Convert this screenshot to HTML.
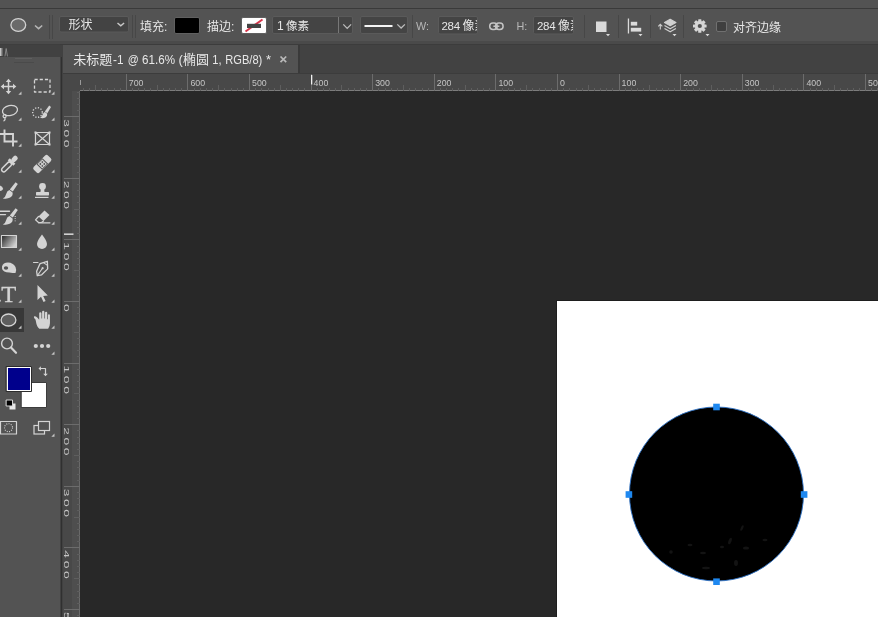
<!DOCTYPE html>
<html lang="zh-CN"><head><meta charset="utf-8"><title>未标题-1</title>
<style>
html,body{margin:0;padding:0;}
body{width:878px;height:617px;overflow:hidden;background:#282828;position:relative;font-family:"Liberation Sans","Noto Sans CJK SC",sans-serif;color:#dcdcdc;font-size:12px;}
.abs{position:absolute;}
#top{left:0;top:0;width:878px;height:8px;background:#535353;}
#topline{left:0;top:8px;width:878px;height:1px;background:#3a3a3a;}
#opt{left:0;top:9px;width:878px;height:32px;background:#535353;}
#band{left:0;top:41px;width:878px;height:33px;background:#424242;}
#band2{left:0;top:41px;width:878px;height:3px;background:#4a4a4a;}
#band3{left:0;top:44px;width:878px;height:1px;background:#3c3c3c;}
#band4{left:0;top:44px;width:60px;height:1px;background:#3e3e3e;}
#lp{left:0;top:45px;width:60px;height:572px;background:#535353;}
#lph{left:0;top:44px;width:60px;height:13px;background:#414141;}
#gap{left:60px;top:45px;width:3px;height:572px;background:#414141;}
#gap2{left:61px;top:57px;width:1px;height:560px;background:#303030;}
#tab{left:63px;top:45px;width:235px;height:28px;background:#535353;}
#tabt{left:73px;top:51px;font-size:12.5px;color:#e4e4e4;white-space:nowrap;letter-spacing:-0.1px;}
#tabx{left:277px;top:50px;font-size:12px;color:#bdbdbd;font-weight:bold;}
#doc{left:557px;top:301px;width:321px;height:316px;background:#fff;}
svg{position:absolute;left:0;top:0;will-change:transform;}
.tk{stroke:#6c6c6c;stroke-width:1;shape-rendering:crispEdges;}
.tk2{stroke:#5e5e5e;stroke-width:1;shape-rendering:crispEdges;}
.rt{font-family:"Liberation Sans",sans-serif;font-size:8.8px;fill:#c4c4c4;}
.o{position:absolute;white-space:nowrap;}
</style></head><body>
<div class="abs" id="top"></div><div class="abs" id="topline"></div>
<div class="abs" id="opt"></div>
<div class="abs" id="band"></div><div class="abs" id="band2"></div><div class="abs" id="band3"></div>
<div class="abs" id="gap"></div><div class="abs" id="gap2"></div>
<div class="abs" id="lp"></div><div class="abs" id="lph"></div><div class="abs" id="band4"></div>
<div class="abs" id="tab"></div>
<div class="abs" id="doc"></div>
<svg width="878" height="617" viewBox="0 0 878 617">
<rect x="63" y="73" width="815" height="18" fill="#484848"/>
<rect x="63" y="91" width="17" height="526" fill="#484848"/>
<rect x="63" y="73" width="815" height="1" fill="#3c3c3c"/>
<rect x="72" y="91" width="7" height="526" fill="#4e4e4e"/>
<rect x="80" y="90" width="798" height="1" fill="#7c7c7c"/>
<rect x="79" y="91" width="1" height="526" fill="#6a6a6a"/>
<line x1="83.2" y1="87.5" x2="83.2" y2="91" class="tk2"/>
<line x1="89.3" y1="87.5" x2="89.3" y2="91" class="tk2"/>
<line x1="95.5" y1="85" x2="95.5" y2="91" class="tk2"/>
<line x1="101.7" y1="87.5" x2="101.7" y2="91" class="tk2"/>
<line x1="107.8" y1="87.5" x2="107.8" y2="91" class="tk2"/>
<line x1="114.0" y1="87.5" x2="114.0" y2="91" class="tk2"/>
<line x1="120.1" y1="87.5" x2="120.1" y2="91" class="tk2"/>
<line x1="126.3" y1="74" x2="126.3" y2="91" class="tk"/>
<text x="128.8" y="86" class="rt">700</text>
<line x1="132.5" y1="87.5" x2="132.5" y2="91" class="tk2"/>
<line x1="138.6" y1="87.5" x2="138.6" y2="91" class="tk2"/>
<line x1="144.8" y1="87.5" x2="144.8" y2="91" class="tk2"/>
<line x1="150.9" y1="87.5" x2="150.9" y2="91" class="tk2"/>
<line x1="157.1" y1="85" x2="157.1" y2="91" class="tk2"/>
<line x1="163.3" y1="87.5" x2="163.3" y2="91" class="tk2"/>
<line x1="169.4" y1="87.5" x2="169.4" y2="91" class="tk2"/>
<line x1="175.6" y1="87.5" x2="175.6" y2="91" class="tk2"/>
<line x1="181.7" y1="87.5" x2="181.7" y2="91" class="tk2"/>
<line x1="187.9" y1="74" x2="187.9" y2="91" class="tk"/>
<text x="190.4" y="86" class="rt">600</text>
<line x1="194.1" y1="87.5" x2="194.1" y2="91" class="tk2"/>
<line x1="200.2" y1="87.5" x2="200.2" y2="91" class="tk2"/>
<line x1="206.4" y1="87.5" x2="206.4" y2="91" class="tk2"/>
<line x1="212.5" y1="87.5" x2="212.5" y2="91" class="tk2"/>
<line x1="218.7" y1="85" x2="218.7" y2="91" class="tk2"/>
<line x1="224.9" y1="87.5" x2="224.9" y2="91" class="tk2"/>
<line x1="231.0" y1="87.5" x2="231.0" y2="91" class="tk2"/>
<line x1="237.2" y1="87.5" x2="237.2" y2="91" class="tk2"/>
<line x1="243.3" y1="87.5" x2="243.3" y2="91" class="tk2"/>
<line x1="249.5" y1="74" x2="249.5" y2="91" class="tk"/>
<text x="252.0" y="86" class="rt">500</text>
<line x1="255.7" y1="87.5" x2="255.7" y2="91" class="tk2"/>
<line x1="261.8" y1="87.5" x2="261.8" y2="91" class="tk2"/>
<line x1="268.0" y1="87.5" x2="268.0" y2="91" class="tk2"/>
<line x1="274.1" y1="87.5" x2="274.1" y2="91" class="tk2"/>
<line x1="280.3" y1="85" x2="280.3" y2="91" class="tk2"/>
<line x1="286.5" y1="87.5" x2="286.5" y2="91" class="tk2"/>
<line x1="292.6" y1="87.5" x2="292.6" y2="91" class="tk2"/>
<line x1="298.8" y1="87.5" x2="298.8" y2="91" class="tk2"/>
<line x1="304.9" y1="87.5" x2="304.9" y2="91" class="tk2"/>
<line x1="311.1" y1="74" x2="311.1" y2="91" class="tk"/>
<text x="313.6" y="86" class="rt">400</text>
<line x1="317.3" y1="87.5" x2="317.3" y2="91" class="tk2"/>
<line x1="323.4" y1="87.5" x2="323.4" y2="91" class="tk2"/>
<line x1="329.6" y1="87.5" x2="329.6" y2="91" class="tk2"/>
<line x1="335.7" y1="87.5" x2="335.7" y2="91" class="tk2"/>
<line x1="341.9" y1="85" x2="341.9" y2="91" class="tk2"/>
<line x1="348.1" y1="87.5" x2="348.1" y2="91" class="tk2"/>
<line x1="354.2" y1="87.5" x2="354.2" y2="91" class="tk2"/>
<line x1="360.4" y1="87.5" x2="360.4" y2="91" class="tk2"/>
<line x1="366.5" y1="87.5" x2="366.5" y2="91" class="tk2"/>
<line x1="372.7" y1="74" x2="372.7" y2="91" class="tk"/>
<text x="375.2" y="86" class="rt">300</text>
<line x1="378.9" y1="87.5" x2="378.9" y2="91" class="tk2"/>
<line x1="385.0" y1="87.5" x2="385.0" y2="91" class="tk2"/>
<line x1="391.2" y1="87.5" x2="391.2" y2="91" class="tk2"/>
<line x1="397.3" y1="87.5" x2="397.3" y2="91" class="tk2"/>
<line x1="403.5" y1="85" x2="403.5" y2="91" class="tk2"/>
<line x1="409.7" y1="87.5" x2="409.7" y2="91" class="tk2"/>
<line x1="415.8" y1="87.5" x2="415.8" y2="91" class="tk2"/>
<line x1="422.0" y1="87.5" x2="422.0" y2="91" class="tk2"/>
<line x1="428.1" y1="87.5" x2="428.1" y2="91" class="tk2"/>
<line x1="434.3" y1="74" x2="434.3" y2="91" class="tk"/>
<text x="436.8" y="86" class="rt">200</text>
<line x1="440.5" y1="87.5" x2="440.5" y2="91" class="tk2"/>
<line x1="446.6" y1="87.5" x2="446.6" y2="91" class="tk2"/>
<line x1="452.8" y1="87.5" x2="452.8" y2="91" class="tk2"/>
<line x1="458.9" y1="87.5" x2="458.9" y2="91" class="tk2"/>
<line x1="465.1" y1="85" x2="465.1" y2="91" class="tk2"/>
<line x1="471.3" y1="87.5" x2="471.3" y2="91" class="tk2"/>
<line x1="477.4" y1="87.5" x2="477.4" y2="91" class="tk2"/>
<line x1="483.6" y1="87.5" x2="483.6" y2="91" class="tk2"/>
<line x1="489.7" y1="87.5" x2="489.7" y2="91" class="tk2"/>
<line x1="495.9" y1="74" x2="495.9" y2="91" class="tk"/>
<text x="498.4" y="86" class="rt">100</text>
<line x1="502.1" y1="87.5" x2="502.1" y2="91" class="tk2"/>
<line x1="508.2" y1="87.5" x2="508.2" y2="91" class="tk2"/>
<line x1="514.4" y1="87.5" x2="514.4" y2="91" class="tk2"/>
<line x1="520.5" y1="87.5" x2="520.5" y2="91" class="tk2"/>
<line x1="526.7" y1="85" x2="526.7" y2="91" class="tk2"/>
<line x1="532.9" y1="87.5" x2="532.9" y2="91" class="tk2"/>
<line x1="539.0" y1="87.5" x2="539.0" y2="91" class="tk2"/>
<line x1="545.2" y1="87.5" x2="545.2" y2="91" class="tk2"/>
<line x1="551.3" y1="87.5" x2="551.3" y2="91" class="tk2"/>
<line x1="557.5" y1="74" x2="557.5" y2="91" class="tk"/>
<text x="560.0" y="86" class="rt">0</text>
<line x1="563.7" y1="87.5" x2="563.7" y2="91" class="tk2"/>
<line x1="569.8" y1="87.5" x2="569.8" y2="91" class="tk2"/>
<line x1="576.0" y1="87.5" x2="576.0" y2="91" class="tk2"/>
<line x1="582.1" y1="87.5" x2="582.1" y2="91" class="tk2"/>
<line x1="588.3" y1="85" x2="588.3" y2="91" class="tk2"/>
<line x1="594.5" y1="87.5" x2="594.5" y2="91" class="tk2"/>
<line x1="600.6" y1="87.5" x2="600.6" y2="91" class="tk2"/>
<line x1="606.8" y1="87.5" x2="606.8" y2="91" class="tk2"/>
<line x1="612.9" y1="87.5" x2="612.9" y2="91" class="tk2"/>
<line x1="619.1" y1="74" x2="619.1" y2="91" class="tk"/>
<text x="621.6" y="86" class="rt">100</text>
<line x1="625.3" y1="87.5" x2="625.3" y2="91" class="tk2"/>
<line x1="631.4" y1="87.5" x2="631.4" y2="91" class="tk2"/>
<line x1="637.6" y1="87.5" x2="637.6" y2="91" class="tk2"/>
<line x1="643.7" y1="87.5" x2="643.7" y2="91" class="tk2"/>
<line x1="649.9" y1="85" x2="649.9" y2="91" class="tk2"/>
<line x1="656.1" y1="87.5" x2="656.1" y2="91" class="tk2"/>
<line x1="662.2" y1="87.5" x2="662.2" y2="91" class="tk2"/>
<line x1="668.4" y1="87.5" x2="668.4" y2="91" class="tk2"/>
<line x1="674.5" y1="87.5" x2="674.5" y2="91" class="tk2"/>
<line x1="680.7" y1="74" x2="680.7" y2="91" class="tk"/>
<text x="683.2" y="86" class="rt">200</text>
<line x1="686.9" y1="87.5" x2="686.9" y2="91" class="tk2"/>
<line x1="693.0" y1="87.5" x2="693.0" y2="91" class="tk2"/>
<line x1="699.2" y1="87.5" x2="699.2" y2="91" class="tk2"/>
<line x1="705.3" y1="87.5" x2="705.3" y2="91" class="tk2"/>
<line x1="711.5" y1="85" x2="711.5" y2="91" class="tk2"/>
<line x1="717.7" y1="87.5" x2="717.7" y2="91" class="tk2"/>
<line x1="723.8" y1="87.5" x2="723.8" y2="91" class="tk2"/>
<line x1="730.0" y1="87.5" x2="730.0" y2="91" class="tk2"/>
<line x1="736.1" y1="87.5" x2="736.1" y2="91" class="tk2"/>
<line x1="742.3" y1="74" x2="742.3" y2="91" class="tk"/>
<text x="744.8" y="86" class="rt">300</text>
<line x1="748.5" y1="87.5" x2="748.5" y2="91" class="tk2"/>
<line x1="754.6" y1="87.5" x2="754.6" y2="91" class="tk2"/>
<line x1="760.8" y1="87.5" x2="760.8" y2="91" class="tk2"/>
<line x1="766.9" y1="87.5" x2="766.9" y2="91" class="tk2"/>
<line x1="773.1" y1="85" x2="773.1" y2="91" class="tk2"/>
<line x1="779.3" y1="87.5" x2="779.3" y2="91" class="tk2"/>
<line x1="785.4" y1="87.5" x2="785.4" y2="91" class="tk2"/>
<line x1="791.6" y1="87.5" x2="791.6" y2="91" class="tk2"/>
<line x1="797.7" y1="87.5" x2="797.7" y2="91" class="tk2"/>
<line x1="803.9" y1="74" x2="803.9" y2="91" class="tk"/>
<text x="806.4" y="86" class="rt">400</text>
<line x1="810.1" y1="87.5" x2="810.1" y2="91" class="tk2"/>
<line x1="816.2" y1="87.5" x2="816.2" y2="91" class="tk2"/>
<line x1="822.4" y1="87.5" x2="822.4" y2="91" class="tk2"/>
<line x1="828.5" y1="87.5" x2="828.5" y2="91" class="tk2"/>
<line x1="834.7" y1="85" x2="834.7" y2="91" class="tk2"/>
<line x1="840.9" y1="87.5" x2="840.9" y2="91" class="tk2"/>
<line x1="847.0" y1="87.5" x2="847.0" y2="91" class="tk2"/>
<line x1="853.2" y1="87.5" x2="853.2" y2="91" class="tk2"/>
<line x1="859.3" y1="87.5" x2="859.3" y2="91" class="tk2"/>
<line x1="865.5" y1="74" x2="865.5" y2="91" class="tk"/>
<text x="868.0" y="86" class="rt">500</text>
<line x1="871.7" y1="87.5" x2="871.7" y2="91" class="tk2"/>
<line x1="877.8" y1="87.5" x2="877.8" y2="91" class="tk2"/>
<line x1="76.5" y1="92.1" x2="80" y2="92.1" class="tk2"/>
<line x1="76.5" y1="98.2" x2="80" y2="98.2" class="tk2"/>
<line x1="76.5" y1="104.4" x2="80" y2="104.4" class="tk2"/>
<line x1="76.5" y1="110.5" x2="80" y2="110.5" class="tk2"/>
<line x1="64" y1="116.7" x2="80" y2="116.7" class="tk"/>
<text x="0" y="0" class="rt" text-anchor="middle" transform="translate(64.3 123.0) rotate(90) scale(2.1 1)" style="font-size:6.6px">3</text>
<text x="0" y="0" class="rt" text-anchor="middle" transform="translate(64.3 133.3) rotate(90) scale(2.1 1)" style="font-size:6.6px">0</text>
<text x="0" y="0" class="rt" text-anchor="middle" transform="translate(64.3 143.6) rotate(90) scale(2.1 1)" style="font-size:6.6px">0</text>
<line x1="76.5" y1="122.9" x2="80" y2="122.9" class="tk2"/>
<line x1="76.5" y1="129.0" x2="80" y2="129.0" class="tk2"/>
<line x1="76.5" y1="135.2" x2="80" y2="135.2" class="tk2"/>
<line x1="76.5" y1="141.3" x2="80" y2="141.3" class="tk2"/>
<line x1="74" y1="147.5" x2="80" y2="147.5" class="tk2"/>
<line x1="76.5" y1="153.7" x2="80" y2="153.7" class="tk2"/>
<line x1="76.5" y1="159.8" x2="80" y2="159.8" class="tk2"/>
<line x1="76.5" y1="166.0" x2="80" y2="166.0" class="tk2"/>
<line x1="76.5" y1="172.1" x2="80" y2="172.1" class="tk2"/>
<line x1="64" y1="178.3" x2="80" y2="178.3" class="tk"/>
<text x="0" y="0" class="rt" text-anchor="middle" transform="translate(64.3 184.6) rotate(90) scale(2.1 1)" style="font-size:6.6px">2</text>
<text x="0" y="0" class="rt" text-anchor="middle" transform="translate(64.3 194.9) rotate(90) scale(2.1 1)" style="font-size:6.6px">0</text>
<text x="0" y="0" class="rt" text-anchor="middle" transform="translate(64.3 205.2) rotate(90) scale(2.1 1)" style="font-size:6.6px">0</text>
<line x1="76.5" y1="184.5" x2="80" y2="184.5" class="tk2"/>
<line x1="76.5" y1="190.6" x2="80" y2="190.6" class="tk2"/>
<line x1="76.5" y1="196.8" x2="80" y2="196.8" class="tk2"/>
<line x1="76.5" y1="202.9" x2="80" y2="202.9" class="tk2"/>
<line x1="74" y1="209.1" x2="80" y2="209.1" class="tk2"/>
<line x1="76.5" y1="215.3" x2="80" y2="215.3" class="tk2"/>
<line x1="76.5" y1="221.4" x2="80" y2="221.4" class="tk2"/>
<line x1="76.5" y1="227.6" x2="80" y2="227.6" class="tk2"/>
<line x1="76.5" y1="233.7" x2="80" y2="233.7" class="tk2"/>
<line x1="64" y1="239.9" x2="80" y2="239.9" class="tk"/>
<text x="0" y="0" class="rt" text-anchor="middle" transform="translate(64.3 246.2) rotate(90) scale(2.1 1)" style="font-size:6.6px">1</text>
<text x="0" y="0" class="rt" text-anchor="middle" transform="translate(64.3 256.5) rotate(90) scale(2.1 1)" style="font-size:6.6px">0</text>
<text x="0" y="0" class="rt" text-anchor="middle" transform="translate(64.3 266.8) rotate(90) scale(2.1 1)" style="font-size:6.6px">0</text>
<line x1="76.5" y1="246.1" x2="80" y2="246.1" class="tk2"/>
<line x1="76.5" y1="252.2" x2="80" y2="252.2" class="tk2"/>
<line x1="76.5" y1="258.4" x2="80" y2="258.4" class="tk2"/>
<line x1="76.5" y1="264.5" x2="80" y2="264.5" class="tk2"/>
<line x1="74" y1="270.7" x2="80" y2="270.7" class="tk2"/>
<line x1="76.5" y1="276.9" x2="80" y2="276.9" class="tk2"/>
<line x1="76.5" y1="283.0" x2="80" y2="283.0" class="tk2"/>
<line x1="76.5" y1="289.2" x2="80" y2="289.2" class="tk2"/>
<line x1="76.5" y1="295.3" x2="80" y2="295.3" class="tk2"/>
<line x1="64" y1="301.5" x2="80" y2="301.5" class="tk"/>
<text x="0" y="0" class="rt" text-anchor="middle" transform="translate(64.3 307.8) rotate(90) scale(2.1 1)" style="font-size:6.6px">0</text>
<line x1="76.5" y1="307.7" x2="80" y2="307.7" class="tk2"/>
<line x1="76.5" y1="313.8" x2="80" y2="313.8" class="tk2"/>
<line x1="76.5" y1="320.0" x2="80" y2="320.0" class="tk2"/>
<line x1="76.5" y1="326.1" x2="80" y2="326.1" class="tk2"/>
<line x1="74" y1="332.3" x2="80" y2="332.3" class="tk2"/>
<line x1="76.5" y1="338.5" x2="80" y2="338.5" class="tk2"/>
<line x1="76.5" y1="344.6" x2="80" y2="344.6" class="tk2"/>
<line x1="76.5" y1="350.8" x2="80" y2="350.8" class="tk2"/>
<line x1="76.5" y1="356.9" x2="80" y2="356.9" class="tk2"/>
<line x1="64" y1="363.1" x2="80" y2="363.1" class="tk"/>
<text x="0" y="0" class="rt" text-anchor="middle" transform="translate(64.3 369.4) rotate(90) scale(2.1 1)" style="font-size:6.6px">1</text>
<text x="0" y="0" class="rt" text-anchor="middle" transform="translate(64.3 379.7) rotate(90) scale(2.1 1)" style="font-size:6.6px">0</text>
<text x="0" y="0" class="rt" text-anchor="middle" transform="translate(64.3 390.0) rotate(90) scale(2.1 1)" style="font-size:6.6px">0</text>
<line x1="76.5" y1="369.3" x2="80" y2="369.3" class="tk2"/>
<line x1="76.5" y1="375.4" x2="80" y2="375.4" class="tk2"/>
<line x1="76.5" y1="381.6" x2="80" y2="381.6" class="tk2"/>
<line x1="76.5" y1="387.7" x2="80" y2="387.7" class="tk2"/>
<line x1="74" y1="393.9" x2="80" y2="393.9" class="tk2"/>
<line x1="76.5" y1="400.1" x2="80" y2="400.1" class="tk2"/>
<line x1="76.5" y1="406.2" x2="80" y2="406.2" class="tk2"/>
<line x1="76.5" y1="412.4" x2="80" y2="412.4" class="tk2"/>
<line x1="76.5" y1="418.5" x2="80" y2="418.5" class="tk2"/>
<line x1="64" y1="424.7" x2="80" y2="424.7" class="tk"/>
<text x="0" y="0" class="rt" text-anchor="middle" transform="translate(64.3 431.0) rotate(90) scale(2.1 1)" style="font-size:6.6px">2</text>
<text x="0" y="0" class="rt" text-anchor="middle" transform="translate(64.3 441.3) rotate(90) scale(2.1 1)" style="font-size:6.6px">0</text>
<text x="0" y="0" class="rt" text-anchor="middle" transform="translate(64.3 451.6) rotate(90) scale(2.1 1)" style="font-size:6.6px">0</text>
<line x1="76.5" y1="430.9" x2="80" y2="430.9" class="tk2"/>
<line x1="76.5" y1="437.0" x2="80" y2="437.0" class="tk2"/>
<line x1="76.5" y1="443.2" x2="80" y2="443.2" class="tk2"/>
<line x1="76.5" y1="449.3" x2="80" y2="449.3" class="tk2"/>
<line x1="74" y1="455.5" x2="80" y2="455.5" class="tk2"/>
<line x1="76.5" y1="461.7" x2="80" y2="461.7" class="tk2"/>
<line x1="76.5" y1="467.8" x2="80" y2="467.8" class="tk2"/>
<line x1="76.5" y1="474.0" x2="80" y2="474.0" class="tk2"/>
<line x1="76.5" y1="480.1" x2="80" y2="480.1" class="tk2"/>
<line x1="64" y1="486.3" x2="80" y2="486.3" class="tk"/>
<text x="0" y="0" class="rt" text-anchor="middle" transform="translate(64.3 492.6) rotate(90) scale(2.1 1)" style="font-size:6.6px">3</text>
<text x="0" y="0" class="rt" text-anchor="middle" transform="translate(64.3 502.9) rotate(90) scale(2.1 1)" style="font-size:6.6px">0</text>
<text x="0" y="0" class="rt" text-anchor="middle" transform="translate(64.3 513.2) rotate(90) scale(2.1 1)" style="font-size:6.6px">0</text>
<line x1="76.5" y1="492.5" x2="80" y2="492.5" class="tk2"/>
<line x1="76.5" y1="498.6" x2="80" y2="498.6" class="tk2"/>
<line x1="76.5" y1="504.8" x2="80" y2="504.8" class="tk2"/>
<line x1="76.5" y1="510.9" x2="80" y2="510.9" class="tk2"/>
<line x1="74" y1="517.1" x2="80" y2="517.1" class="tk2"/>
<line x1="76.5" y1="523.3" x2="80" y2="523.3" class="tk2"/>
<line x1="76.5" y1="529.4" x2="80" y2="529.4" class="tk2"/>
<line x1="76.5" y1="535.6" x2="80" y2="535.6" class="tk2"/>
<line x1="76.5" y1="541.7" x2="80" y2="541.7" class="tk2"/>
<line x1="64" y1="547.9" x2="80" y2="547.9" class="tk"/>
<text x="0" y="0" class="rt" text-anchor="middle" transform="translate(64.3 554.2) rotate(90) scale(2.1 1)" style="font-size:6.6px">4</text>
<text x="0" y="0" class="rt" text-anchor="middle" transform="translate(64.3 564.5) rotate(90) scale(2.1 1)" style="font-size:6.6px">0</text>
<text x="0" y="0" class="rt" text-anchor="middle" transform="translate(64.3 574.8) rotate(90) scale(2.1 1)" style="font-size:6.6px">0</text>
<line x1="76.5" y1="554.1" x2="80" y2="554.1" class="tk2"/>
<line x1="76.5" y1="560.2" x2="80" y2="560.2" class="tk2"/>
<line x1="76.5" y1="566.4" x2="80" y2="566.4" class="tk2"/>
<line x1="76.5" y1="572.5" x2="80" y2="572.5" class="tk2"/>
<line x1="74" y1="578.7" x2="80" y2="578.7" class="tk2"/>
<line x1="76.5" y1="584.9" x2="80" y2="584.9" class="tk2"/>
<line x1="76.5" y1="591.0" x2="80" y2="591.0" class="tk2"/>
<line x1="76.5" y1="597.2" x2="80" y2="597.2" class="tk2"/>
<line x1="76.5" y1="603.3" x2="80" y2="603.3" class="tk2"/>
<line x1="64" y1="609.5" x2="80" y2="609.5" class="tk"/>
<text x="0" y="0" class="rt" text-anchor="middle" transform="translate(64.3 615.8) rotate(90) scale(2.1 1)" style="font-size:6.6px">5</text>
<text x="0" y="0" class="rt" text-anchor="middle" transform="translate(64.3 626.1) rotate(90) scale(2.1 1)" style="font-size:6.6px">0</text>
<text x="0" y="0" class="rt" text-anchor="middle" transform="translate(64.3 636.4) rotate(90) scale(2.1 1)" style="font-size:6.6px">0</text>
<line x1="76.5" y1="615.7" x2="80" y2="615.7" class="tk2"/>
<rect x="311" y="75" width="1.300" height="9.500" fill="#f0f0f0"/>
<rect x="64" y="233.500" width="9.500" height="1.300" fill="#f0f0f0"/>
<rect x="80" y="80" width="1" height="5" fill="#9a9a9a"/>
<!-- shape -->
<rect x="556.500" y="300.500" width="322" height="317" fill="none" stroke="#1e1e1e" stroke-width="1"/>
<circle cx="716.500" cy="494" r="87" fill="#000"/>
<g fill="#131313"><ellipse cx="730" cy="541" rx="1.500" ry="3.500" transform="rotate(20 730 541)"/><ellipse cx="746" cy="548" rx="3" ry="1.600"/><ellipse cx="722" cy="547" rx="2" ry="1.200"/><ellipse cx="690" cy="545" rx="2.500" ry="1.200"/><ellipse cx="706" cy="568" rx="4" ry="1.200"/><ellipse cx="736" cy="563" rx="2" ry="3"/><ellipse cx="671" cy="552" rx="1.800" ry="1.800"/><ellipse cx="742" cy="528" rx="1.200" ry="3" transform="rotate(25 742 528)"/><ellipse cx="703" cy="553" rx="3" ry="1.200"/><ellipse cx="765" cy="540" rx="2.500" ry="1.200"/></g>
<circle cx="716.500" cy="494" r="87" fill="none" stroke="#2a6fc4" stroke-width="0.900"/>
<g fill="#1e88f0">
<rect x="713.200" y="403.700" width="6.600" height="6.600"/>
<rect x="713.200" y="578.400" width="6.600" height="6.600"/>
<rect x="625.600" y="491.200" width="6.600" height="6.600"/>
<rect x="800.800" y="491.200" width="6.600" height="6.600"/>
</g>
<g font-family='"Liberation Sans","Noto Sans CJK SC",sans-serif' font-size="13" fill="#e8e8e8">
<text x="73.300" y="64.200">未标题</text>
<text x="113" y="64.200" textLength="10.500" lengthAdjust="spacingAndGlyphs">-1</text>
<text x="127.800" y="64.200" textLength="11" lengthAdjust="spacingAndGlyphs">@</text>
<text x="142" y="64.200" textLength="33" lengthAdjust="spacingAndGlyphs">61.6%</text>
<text x="178.600" y="64.200">(</text>
<text x="183" y="64.200">椭圆</text>
<text x="212.300" y="64.200" textLength="9.300" lengthAdjust="spacingAndGlyphs">1,</text>
<text x="225.300" y="64.200" textLength="37" lengthAdjust="spacingAndGlyphs">RGB/8)</text>
<text x="266" y="64.200">*</text>
</g>
<path d="M280.500 56.500 L286.200 62.200 M286.200 56.500 L280.500 62.200" stroke="#b9b9b9" stroke-width="1.700" fill="none"/>
<rect x="298" y="45" width="2" height="28" fill="#3a3a3a"/>
<!-- TOOLS -->
<g id="tools" fill="none" stroke="#d4d4d4" stroke-width="1.3" stroke-linecap="round" stroke-linejoin="round">
<!-- panel header grip -->
<rect x="0" y="48" width="1.600" height="8" fill="#c4c4c4" stroke="none"/>
<rect x="2.200" y="48" width="0.700" height="8" fill="#7a7a7a" stroke="none"/>
<path d="M5 56 L6.200 48.500 L7.400 56" stroke="#8c8c8c" stroke-width="0.900" fill="none"/>
<rect x="15" y="58" width="17" height="1" fill="#606060" stroke="none"/>
<rect x="14" y="62" width="20" height="1" fill="#4a4a4a" stroke="none"/>
<!-- selected tool bg -->
<rect x="0" y="308" width="24" height="24" fill="#383838" stroke="none"/>
<!-- corner marks -->
<g fill="#c4c4c4" stroke="none">
<path d="M21.5 91.5 v3.2 h-3.2z"/><path d="M54.5 91.5 v3.2 h-3.2z"/>
<path d="M21.5 117.5 v3.2 h-3.2z"/><path d="M54.5 117.5 v3.2 h-3.2z"/>
<path d="M21.5 143.5 v3.2 h-3.2z"/>
<path d="M21.5 169.5 v3.2 h-3.2z"/><path d="M54.5 169.5 v3.2 h-3.2z"/>
<path d="M21.5 195.5 v3.2 h-3.2z"/><path d="M54.5 195.5 v3.2 h-3.2z"/>
<path d="M21.5 221.5 v3.2 h-3.2z"/><path d="M54.5 221.5 v3.2 h-3.2z"/>
<path d="M21.5 247.5 v3.2 h-3.2z"/><path d="M54.5 247.5 v3.2 h-3.2z"/>
<path d="M21.5 273.5 v3.2 h-3.2z"/><path d="M54.5 273.5 v3.2 h-3.2z"/>
<path d="M21.5 299.5 v3.2 h-3.2z"/><path d="M54.5 299.5 v3.2 h-3.2z"/>
<path d="M21.5 325.5 v3.2 h-3.2z"/><path d="M54.5 325.5 v3.2 h-3.2z"/>
<path d="M54.5 351.5 v3.2 h-3.2z"/>
<path d="M54.5 433.5 v3.2 h-3.2z"/>
</g>
<!-- move -->
<g transform="translate(8.500 86.500)" stroke-width="1.500" stroke-linecap="butt">
<path d="M0 -5.500 V5.500 M-5.500 0 H5.500"/>
<g fill="#d4d4d4" stroke="none"><path d="M0 -7.800 L2.700 -4.500 H-2.700z"/><path d="M0 7.800 L2.700 4.500 H-2.700z"/><path d="M-7.800 0 L-4.500 -2.700 V2.700z"/><path d="M7.800 0 L4.500 -2.700 V2.700z"/></g>
</g>
<!-- marquee -->
<rect x="34.5" y="79.5" width="15.5" height="12.5" stroke-dasharray="3.2 2" stroke-width="1.300" stroke-linecap="butt"/>
<!-- lasso -->
<g stroke-width="1.3">
<ellipse cx="10" cy="110.5" rx="7.6" ry="5" transform="rotate(-12 10 110.5)"/>
<circle cx="4.6" cy="116.2" r="1.5"/>
<path d="M5 117.8 q0.5 2 -1 3"/>
</g>
<!-- quick select -->
<circle cx="37.500" cy="112.500" r="4.800" stroke-dasharray="1.200 1.600" stroke-width="1.400" stroke-linecap="butt"/>
<path d="M49.200 105.500 L51 107 L47.300 113.200 L44.800 111.400z" fill="#d4d4d4" stroke="none"/>
<path d="M44.600 111.800 L47.200 113.800 q0.300 2.400 -1.800 3.700 q-2.600 1.300 -5.400 0.300 q2.200 -1 2.600 -3 q0.500 -2.200 2.400 -3z" fill="#d4d4d4" stroke="none"/>
<!-- crop -->
<g stroke-width="1.9" stroke-linecap="butt" stroke-linejoin="miter">
<path d="M4.5 129.5 V141.5 H17.5"/>
<path d="M0 134 H13 V146.5"/>
</g>
<!-- frame -->
<g stroke-width="1.2">
<rect x="35.5" y="132.5" width="14" height="12"/>
<path d="M35.5 132.5 L49.5 144.5 M49.5 132.5 L35.5 144.5"/>
<g fill="#d4d4d4" stroke="none"><rect x="34.5" y="131.5" width="2" height="2"/><rect x="48.5" y="131.5" width="2" height="2"/><rect x="34.5" y="143.5" width="2" height="2"/><rect x="48.5" y="143.5" width="2" height="2"/></g>
</g>
<!-- eyedropper -->
<g transform="translate(10 163.500) rotate(45) scale(1.150)">
<rect x="-1.900" y="-1" width="3.800" height="10.500" rx="1.800" stroke-width="1.300"/>
<rect x="-3.400" y="-3.200" width="6.800" height="2.600" fill="#d4d4d4" stroke="none"/>
<rect x="-2.100" y="-8.500" width="4.200" height="5.800" rx="1.800" fill="#d4d4d4" stroke="none"/>
</g>
<!-- healing / bandaid -->
<g transform="translate(42.300 164) rotate(-45)">
<rect x="-10" y="-4" width="20" height="8" rx="2" fill="#d4d4d4" stroke="none"/>
<rect x="-4.300" y="-4" width="8.600" height="8" fill="#535353" stroke="none"/>
<rect x="-3.300" y="-3.200" width="6.600" height="6.400" fill="#d4d4d4" stroke="none"/>
<g fill="#535353" stroke="none"><rect x="-2.200" y="-2.200" width="1.600" height="1.600"/><rect x="0.600" y="-2.200" width="1.600" height="1.600"/><rect x="-2.200" y="0.600" width="1.600" height="1.600"/><rect x="0.600" y="0.600" width="1.600" height="1.600"/></g>
</g>
<!-- brush -->
<path d="M0 185.500 q2.600 0.600 3.200 3.400 q-1.200 2 -3.200 2.200z" fill="#d4d4d4" stroke="none"/>
<path d="M15.600 182.300 L17.800 184 L12.800 191.600 L9.800 189.400z" fill="#d4d4d4" stroke="none"/>
<path d="M9.400 190 L12.600 192.400 q0.600 3.200 -2.400 5.200 q-3.200 1.800 -7.400 0.800 q2.800 -1.400 3.200 -4 q0.800 -3.400 3.400 -4.400z" fill="#d4d4d4" stroke="none"/>
<!-- stamp -->
<g fill="#d4d4d4" stroke="none">
<circle cx="42.5" cy="186.5" r="3.4"/>
<path d="M41 188 h3 l0.6 4.5 h-4.2z"/>
<rect x="36" y="192" width="13" height="3.4" rx="0.6"/>
<rect x="35" y="196.8" width="13.5" height="1.2"/>
</g>
<!-- history brush -->
<path d="M0 211.300 H9.500" stroke-width="1.400"/>
<path d="M0 214.600 H5.500" stroke-width="1.400"/>
<path d="M15.600 208.300 L17.800 210 L12.800 217.600 L9.800 215.400z" fill="#d4d4d4" stroke="none"/>
<path d="M9.400 216 L12.600 218.400 q0.600 3.200 -2.400 5.200 q-3.200 1.800 -7.400 0.800 q2.800 -1.400 3.200 -4 q0.800 -3.400 3.400 -4.400z" fill="#d4d4d4" stroke="none"/>
<path d="M15.200 216 v6" stroke-dasharray="0.900 1.300" stroke-width="1.100" stroke-linecap="butt"/>
<!-- eraser -->
<g>
<path d="M44.5 210.5 L49.5 215 L43.5 221 L38.5 216.5z" fill="#d4d4d4" stroke="none"/>
<path d="M38.5 216.5 L35.5 219.8 L38.5 222.5 H41.5 L43.5 221" stroke-width="1.2"/>
<path d="M38.5 222.8 H50" stroke-width="1.2"/>
</g>
<!-- gradient -->
<defs><linearGradient id="gr" x1="0" x2="1" y1="0" y2="0.600"><stop offset="0" stop-color="#222"/><stop offset="1" stop-color="#cfcfcf"/></linearGradient></defs>
<rect x="1.5" y="235.5" width="15" height="12" fill="url(#gr)" stroke="#d4d4d4" stroke-width="1.1"/>
<!-- blur drop -->
<path d="M42 234.5 q5 6.5 5 9.5 a5 5 0 0 1 -10 0 q0 -3 5 -9.500z" fill="#d4d4d4" stroke="none"/>
<!-- dodge / sponge -->
<path d="M2 266.5 q1 -4 6 -4 q5 0 7.500 4.500 q1.500 3.500 0 6 l-3 0 q-3 -0.500 -6 -0.800 q-5 -1 -4.500 -5.700z" fill="#d4d4d4" stroke="none"/>
<ellipse cx="6" cy="268" rx="2.2" ry="1.7" fill="#535353" stroke="none"/>
<!-- pen -->
<g transform="translate(42.300 268.500) rotate(35) scale(1.100)">
<path d="M0 -8 L4.2 -2.500 L2.800 5 L0 8 L-2.800 5 L-4.200 -2.500z" stroke-width="1.2"/>
<path d="M0 7.500 V0" stroke-width="1"/>
<circle cx="0" cy="-0.500" r="1" fill="#d4d4d4" stroke="none"/>
<path d="M-2.2 -5 L2.2 -5" stroke-width="1"/>
</g>
<path d="M33.500 262.500 h4.500" stroke-width="1.1"/>
<!-- path select arrow -->
<path d="M37.500 285 L37.500 300 L41 296.800 L43.500 302 L45.600 301 L43.200 296 L47.800 295.600z" fill="#d4d4d4" stroke="none"/>
<!-- type tool -->
<text x="1.300" y="301.600" font-family='"Liberation Serif",serif' font-size="22.500" fill="#d4d4d4" stroke="#d4d4d4" stroke-width="0.300" textLength="15" lengthAdjust="spacingAndGlyphs">T</text>
<rect x="0" y="299.800" width="0.900" height="1.800" fill="#c0c0c0" stroke="none"/>
<!-- ellipse tool -->
<ellipse cx="8.500" cy="320" rx="7.400" ry="6" stroke-width="1.300" fill="#5e5e5e"/>
<!-- hand -->
<g fill="#d4d4d4" stroke="none" transform="translate(42 320) scale(1.120 0.960) translate(-42 -318.500)">
<path d="M36.200 318 q-2.200 -2.600 -1 -3.400 q1.300 -0.600 2.800 1.600 l1.500 2 V311.500 q0 -1.200 1 -1.200 q1 0 1 1.200 V317 h0.600 V310 q0 -1.200 1 -1.200 q1 0 1 1.200 V317 h0.600 V311 q0 -1.200 1 -1.200 q1 0 1 1.200 V317.600 h0.600 V313.500 q0 -1.100 0.900 -1.100 q0.900 0 0.900 1.100 V322 q0 3 -1.600 5.600 H39.600 q-1.200 -1.400 -1.800 -2.600 q-0.800 -1.600 -1.600 -7z"/>
</g>
<!-- zoom -->
<circle cx="7" cy="343.500" r="5.400" stroke-width="1.400"/>
<path d="M11 347.600 L16 352.800" stroke-width="2.200"/>
<!-- dots -->
<g fill="#d4d4d4" stroke="none"><circle cx="35.800" cy="346" r="2.100"/><circle cx="42" cy="346" r="2.100"/><circle cx="48.200" cy="346" r="2.100"/></g>
<!-- colour swatches -->
<rect x="21.500" y="382.500" width="25" height="25" fill="#fff" stroke="#3c3c3c" stroke-width="1"/>
<rect x="6.500" y="366.500" width="25" height="25" fill="#fff" stroke="#2c2c2c" stroke-width="1"/>
<rect x="8" y="368" width="22" height="22" fill="#00008c" stroke="none"/>
<!-- swap -->
<g stroke-width="1.200"><path d="M40.500 368.500 H45.500 V374"/><path d="M38.500 368.500 l2.400 -2.300 v4.600z M45.500 376.200 l-2.300 -2.500 h4.600z" fill="#d4d4d4" stroke="none"/></g>
<!-- default colours -->
<rect x="9.500" y="403.500" width="6" height="6" fill="#e8e8e8" stroke="none"/>
<rect x="6.500" y="400" width="6" height="6" fill="#000" stroke="#d4d4d4" stroke-width="1"/>
<!-- quick mask -->
<rect x="0.500" y="421.500" width="16" height="12.500" stroke-width="1.200"/>
<circle cx="8.500" cy="427.700" r="4" stroke-dasharray="1 1.300" stroke-width="1.100" stroke-linecap="butt"/>
<!-- screen mode -->
<rect x="34" y="425.500" width="10.500" height="8.500" stroke-width="1.200" stroke-linejoin="miter"/>
<rect x="38.500" y="421.500" width="11" height="9" stroke-width="1.200" fill="#535353" stroke-linejoin="miter"/>
</g>

<!-- OPTIONS BAR -->
<g id="opts">
<g font-family='"Liberation Sans","Noto Sans CJK SC",sans-serif' font-size="12" fill="#e6e6e6">
<!-- tool preset -->
<ellipse cx="18.3" cy="25" rx="7.4" ry="6.4" fill="#6a6a6a" stroke="#d2d2d2" stroke-width="1.3"/>
<path d="M35 25.5 L38.6 28.6 L42.2 25.5" fill="none" stroke="#b4b4b4" stroke-width="1.6"/>
<rect x="49" y="15" width="1" height="24" fill="#474747"/><rect x="52" y="15" width="1" height="24" fill="#474747"/>
<!-- mode dropdown -->
<rect x="59.5" y="16.500" width="69" height="15.500" rx="1.500" fill="#434343" stroke="#5a5a5a" stroke-width="1"/>
<text x="68.500" y="29.200">形状</text>
<path d="M117.500 23 L120.800 25.800 L124.100 23" fill="none" stroke="#c8c8c8" stroke-width="1.500"/>
<rect x="132" y="15" width="1" height="23" fill="#474747"/><rect x="135" y="15" width="1" height="23" fill="#474747"/>
<!-- fill -->
<text x="140" y="30.600">填充:</text>
<rect x="174.500" y="17.500" width="25" height="16" rx="1.500" fill="#000" stroke="#606060" stroke-width="1"/>
<!-- stroke -->
<text x="207" y="30.600">描边:</text>
<rect x="241.500" y="17.500" width="25" height="16" rx="1.500" fill="#fff" stroke="#606060" stroke-width="1"/>
<path d="M245.500 31.500 L262.500 19.500" stroke="#d8354a" stroke-width="2"/>
<rect x="247" y="23.800" width="14" height="4.200" fill="#444"/>
<!-- stroke width -->
<rect x="272.500" y="16.500" width="80" height="17" rx="1.500" fill="#444" stroke="#5a5a5a" stroke-width="1"/>
<rect x="338" y="17" width="1" height="16" fill="#787878"/>
<text x="277" y="30.400">1</text><text x="286" y="30.400" font-size="11.600">像素</text>
<path d="M343.300 24.400 L347.200 28.400 L351.100 24.400" fill="none" stroke="#bcbcbc" stroke-width="1.300"/>
<!-- stroke type -->
<rect x="360.500" y="16.500" width="47" height="17" rx="1.500" fill="#444" stroke="#5a5a5a" stroke-width="1"/>
<rect x="364.500" y="25" width="28" height="2" fill="#f4f4f4"/>
<path d="M397.300 24.400 L401.100 28 L404.900 24.400" fill="none" stroke="#bcbcbc" stroke-width="1.300"/>
<rect x="412" y="15" width="1" height="23" fill="#474747"/>
<!-- W -->
<text x="416" y="30" fill="#b8b8b8" font-size="10.800">W:</text>
<rect x="438.500" y="16.500" width="39" height="17.500" rx="1.500" fill="#444" stroke="#5a5a5a" stroke-width="1"/>
<svg x="439" y="17" width="38" height="17"><text x="2.500" y="13.200" font-size="11.500" letter-spacing="-0.300">284</text><text x="23.500" y="13.400" font-size="12">像素</text></svg>
<!-- link -->
<g fill="none" stroke="#c4c4c4" stroke-width="1.500">
<rect x="489.700" y="23" width="7.500" height="6.400" rx="3.200"/>
<rect x="495.600" y="23" width="7.500" height="6.400" rx="3.200"/>
</g>
<rect x="493.400" y="25.500" width="6" height="1.500" fill="#c4c4c4"/>
<!-- H -->
<text x="516.500" y="30" fill="#b8b8b8" font-size="10.800">H:</text>
<rect x="533.500" y="16.500" width="40" height="17.500" rx="1.500" fill="#444" stroke="#5a5a5a" stroke-width="1"/>
<svg x="534" y="17" width="39" height="17"><text x="3" y="13.200" font-size="11.500" letter-spacing="-0.300">284</text><text x="24" y="13.400" font-size="12">像素</text></svg>
<rect x="584" y="15" width="1" height="23" fill="#474747"/>
<!-- path ops -->
<rect x="596" y="21.500" width="10.500" height="10.500" fill="#dadada"/>
<path d="M606 34 h4 l-2 2.200z" fill="#dadada"/>
<rect x="618" y="15" width="1" height="23" fill="#474747"/>
<!-- align -->
<rect x="627.800" y="18.500" width="1.300" height="15" fill="#dadada"/>
<rect x="630.800" y="21.800" width="6.400" height="3.800" fill="#dadada"/>
<rect x="630.800" y="27.800" width="10.400" height="3.800" fill="#dadada"/>
<path d="M638.500 34 h4 l-2 2.200z" fill="#dadada"/>
<rect x="650" y="15" width="1" height="23" fill="#474747"/>
<!-- arrange -->
<path d="M660.300 29.500 V24.500 M658.300 26.300 L660.300 24.200 L662.300 26.300" fill="none" stroke="#cfcfcf" stroke-width="1.100"/>
<g fill="none" stroke="#d0d0d0" stroke-width="1.200" stroke-linejoin="round">
<path d="M664.500 28.600 L670.200 31.800 L675.900 28.600"/>
<path d="M664.500 25.600 L670.200 28.800 L675.900 25.600"/>
<path d="M670.200 19.300 L675.900 22.500 L670.200 25.700 L664.500 22.500z" fill="#d0d0d0"/>
</g>
<path d="M672.500 34 h4 l-2 2.200z" fill="#dadada"/>
<rect x="683" y="15" width="1" height="23" fill="#474747"/>
<!-- gear -->
<g transform="translate(699.800 26)">
<g fill="#d6d6d6">
<rect x="-1.600" y="-6.800" width="3.200" height="13.600" rx="0.600"/>
<rect x="-1.600" y="-6.800" width="3.200" height="13.600" rx="0.600" transform="rotate(45)"/>
<rect x="-1.600" y="-6.800" width="3.200" height="13.600" rx="0.600" transform="rotate(90)"/>
<rect x="-1.600" y="-6.800" width="3.200" height="13.600" rx="0.600" transform="rotate(135)"/>
<circle r="5"/>
</g>
<circle r="2.100" fill="#535353"/>
</g>
<path d="M705.500 34 h4 l-2 2.200z" fill="#dadada"/>
<!-- checkbox -->
<rect x="716.500" y="21.500" width="10" height="10" rx="1.500" fill="#3f3f3f" stroke="#707070" stroke-width="1"/>
<text x="733" y="32.300">对齐边缘</text>
</g>
</g>

</svg>
</body></html>
